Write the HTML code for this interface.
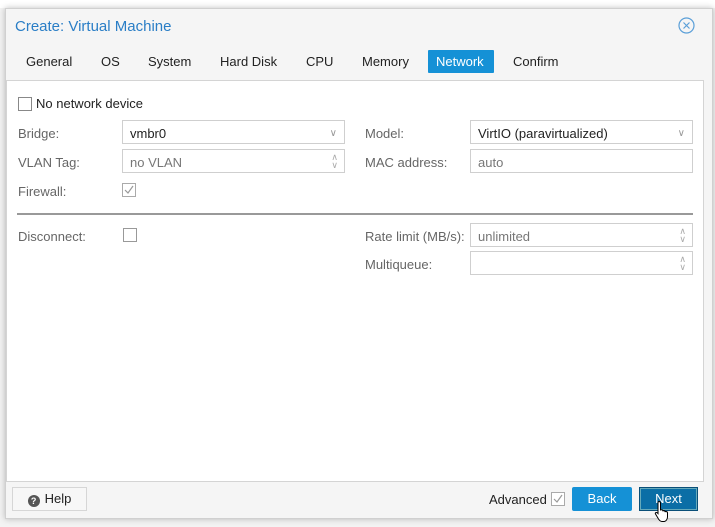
<!DOCTYPE html>
<html><head><style>
*{box-sizing:border-box;margin:0;padding:0}
body{width:715px;height:527px;background:#f3f3f3;font-family:"Liberation Sans",sans-serif;font-size:13px;color:#333;position:relative;overflow:hidden}
.abs{position:absolute}
.win{left:5px;top:8px;width:708px;height:511px;background:#f5f5f5;border:1px solid #d0d0d0;box-shadow:0 0 6px rgba(0,0,0,.25)}
.tab{position:absolute;top:50px;height:23px;line-height:23px;font-size:13px;color:#222;padding:0 8px}
.lbl{position:absolute;font-size:13px;color:#666}
.fld{position:absolute;height:24px;border:1px solid #cfcfcf;background:#fff;font-size:13px;line-height:25px;padding-left:7px;color:#222}
.cb{position:absolute;width:14px;height:14px;border:1px solid #888;background:#fff}
.btn{position:absolute;height:24px;line-height:24px;text-align:center;font-size:13px}
.sp{position:absolute;right:6px;top:3px;color:#aaa;font-size:9px;line-height:8px}
</style></head><body>
<div class="abs" style="left:0;top:0;width:715px;height:8px;background:#fff"></div>
<div class="abs" style="left:704px;top:200px;font-size:12px;color:#9ab">9</div>
<div class="abs" style="left:704px;top:226px;font-size:12px;color:#9ab">9</div>
<div class="abs" style="left:704px;top:252px;font-size:12px;color:#9ab">9</div>
<div class="abs win"></div>
<div class="abs" style="left:15px;top:18px;font-size:15px;color:#2a7ec6">Create: Virtual Machine</div>
<svg class="abs" style="left:678px;top:17px" width="17" height="17" viewBox="0 0 17 17"><circle cx="8.5" cy="8.5" r="7.5" fill="none" stroke="#5a9fd8" stroke-width="1.2"/><path d="M5.5 5.5L11.5 11.5M11.5 5.5L5.5 11.5" stroke="#5a9fd8" stroke-width="1.2"/></svg>
<div class="tab" style="left:18px">General</div>
<div class="tab" style="left:93px">OS</div>
<div class="tab" style="left:140px">System</div>
<div class="tab" style="left:212px">Hard Disk</div>
<div class="tab" style="left:298px">CPU</div>
<div class="tab" style="left:354px">Memory</div>
<div class="tab" style="left:428px;width:66px;background:#1591d6;color:#fff;border-radius:1px">Network</div>
<div class="tab" style="left:505px">Confirm</div>
<div class="abs" style="left:6px;top:80px;width:698px;height:402px;background:#fff;border:1px solid #d4d4d4"></div>
<div class="cb" style="left:18px;top:97px"></div>
<div class="abs" style="left:36px;top:96px;color:#222">No network device</div>
<div class="lbl" style="left:18px;top:126px">Bridge:</div>
<div class="fld" style="left:122px;top:120px;width:223px">vmbr0<span style="position:absolute;right:7px;top:0;color:#999;font-size:10px">&#8744;</span></div>
<div class="lbl" style="left:18px;top:155px">VLAN Tag:</div>
<div class="fld" style="left:122px;top:149px;width:223px;color:#777">no VLAN<span class="sp">&#8743;<br>&#8744;</span></div>
<div class="lbl" style="left:18px;top:184px">Firewall:</div>
<svg class="abs" style="left:122px;top:183px" width="14" height="14"><rect x=".5" y=".5" width="13" height="13" fill="#fff" stroke="#aaa"/><path d="M3 7l3 3 5-7" fill="none" stroke="#999" stroke-width="1.2"/></svg>
<div class="lbl" style="left:365px;top:126px">Model:</div>
<div class="fld" style="left:470px;top:120px;width:223px">VirtIO (paravirtualized)<span style="position:absolute;right:7px;top:0;color:#999;font-size:10px">&#8744;</span></div>
<div class="lbl" style="left:365px;top:155px">MAC address:</div>
<div class="fld" style="left:470px;top:149px;width:223px;color:#777">auto</div>
<div class="abs" style="left:17px;top:213px;width:676px;height:2px;background:#999"></div>
<div class="lbl" style="left:18px;top:229px">Disconnect:</div>
<div class="cb" style="left:123px;top:228px;border-color:#999"></div>
<div class="lbl" style="left:365px;top:229px">Rate limit (MB/s):</div>
<div class="fld" style="left:470px;top:223px;width:223px;color:#777">unlimited<span class="sp">&#8743;<br>&#8744;</span></div>
<div class="lbl" style="left:365px;top:257px">Multiqueue:</div>
<div class="fld" style="left:470px;top:251px;width:223px"><span class="sp">&#8743;<br>&#8744;</span></div>
<div class="btn" style="left:12px;top:487px;width:75px;background:#f7f7f7;border:1px solid #d6d6d6;color:#222;line-height:22px"><span style="display:inline-block;width:12px;height:12px;border-radius:50%;background:#555;color:#fff;font-size:9px;line-height:12px;font-weight:bold;vertical-align:-1px;margin-right:5px">?</span>Help</div>
<div class="abs" style="left:489px;top:492px;color:#222">Advanced</div>
<svg class="abs" style="left:551px;top:492px" width="14" height="14"><rect x=".5" y=".5" width="13" height="13" fill="#fff" stroke="#aaa"/><path d="M3 7l3 3 5-7" fill="none" stroke="#999" stroke-width="1.2"/></svg>
<div class="btn" style="left:572px;top:487px;width:60px;background:#1591d6;color:#fff;border-radius:2px">Back</div>
<div class="btn" style="left:639px;top:487px;width:59px;background:#0b6ea6;color:#fff;border:1px solid #0a4f78;box-shadow:inset 0 0 0 1px #6ab;line-height:22px">Next</div>
<svg class="abs" style="left:654px;top:500px" width="16" height="22" viewBox="0 0 16 22"><path d="M5 1.5c1 0 1.5.5 1.5 1.5v7l1-.3c.8 0 1.3.5 1.3 1.1l1-.2c.8 0 1.2.5 1.2 1l1-.1c.9 0 1.5.6 1.5 1.5v4c0 2-1.5 4.5-3.5 4.5H8c-1.5 0-2.5-1-3.5-2.5L1.5 14c-.5-.8 0-1.5.8-1.5.6 0 1.2.4 1.7 1V3c0-1 .3-1.5 1-1.5z" fill="#fff" stroke="#000" stroke-width="1"/></svg>
</body></html>
